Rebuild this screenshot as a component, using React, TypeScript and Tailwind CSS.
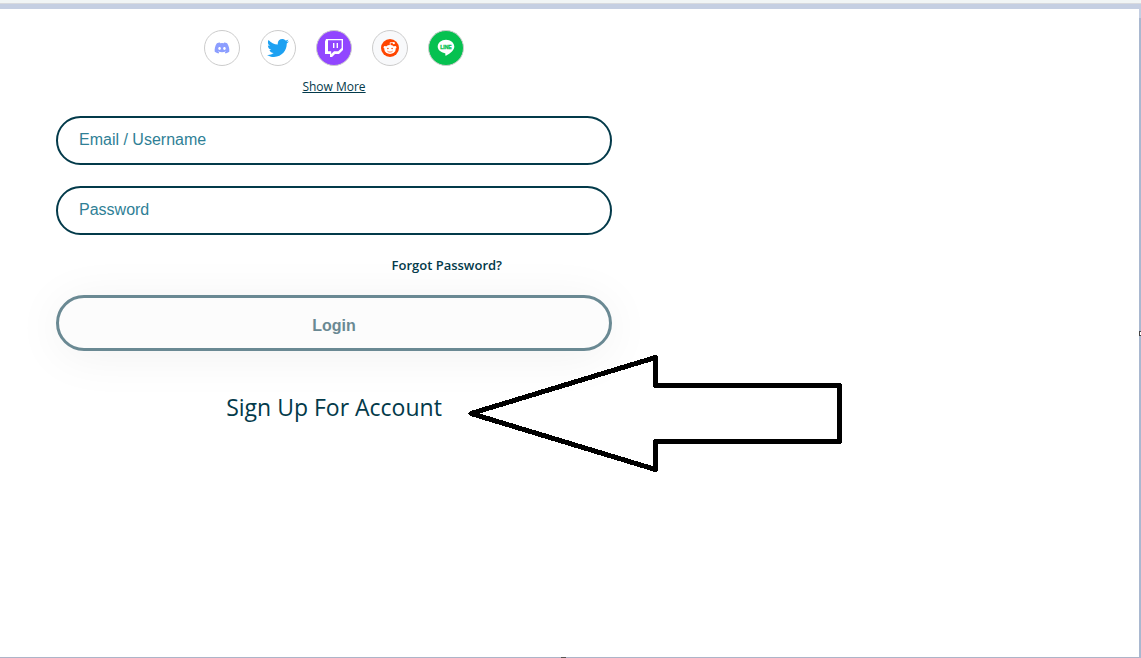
import type { ReactNode } from 'react'
import { FaDiscord, FaTwitter } from 'react-icons/fa'

interface SocialButtonProps {
  label: string;
  className: string;
  children: ReactNode;
}

function SocialButton({label, className, children}: SocialButtonProps) {
  return (
    <button
      type="button"
      aria-label={label}
      className={`flex size-9 items-center justify-center rounded-full border border-[#cccccc] ${className}`}
    >
      {children}
    </button>
  )
}

function TwitchIcon() {
  return (
    <svg viewBox="0 0 20 20" className="size-5" aria-hidden="true">
      <path fill="#fff" fillRule="evenodd" d="M2 1h17v11l-4 4h-4l-3 3H6v-3H1V3.500zM4 2.200v11h3.200V16l2.800-2.800h4.200l3.400-3.200V2.200z" />
      <path fill="#fff" d="M9 5h1.400v5H9zM12.600 5H14v5h-1.400z" />
    </svg>
  )
}

function RedditIcon() {
  return (
    <svg viewBox="0 0 18 18" className="size-[18px]" aria-hidden="true">
      <circle cx="9" cy="9" r="9" fill="#ff4500" />
      <path d="M9.200 6.600V3.600h3" fill="none" stroke="#fff" strokeWidth="0.8" strokeLinejoin="round" />
      <circle cx="12.800" cy="4.200" r="1.100" fill="#fff" />
      <circle cx="3.900" cy="8.400" r="1.300" fill="#fff" />
      <circle cx="14.100" cy="8.400" r="1.300" fill="#fff" />
      <ellipse cx="9" cy="10.500" rx="5.600" ry="4.400" fill="#fff" />
      <circle cx="6.900" cy="9.500" r="0.800" fill="#ff4500" />
      <circle cx="11.100" cy="9.500" r="0.800" fill="#ff4500" />
      <path d="M6.700 12.400c1.200 1 3.400 1 4.600 0" fill="none" stroke="#ff4500" strokeWidth="0.7" strokeLinecap="round" />
    </svg>
  )
}

function LineIcon() {
  return (
    <svg viewBox="0 0 18 18" className="size-[18px]" aria-hidden="true">
      <path fill="#fff" d="M9 .8c4.600 0 8.300 3 8.300 6.800 0 1.600-.6 3-1.900 4.300-1.700 2-5.400 4.200-6.400 4.700-.9.300-.8-.3-.7-.6l.1-1.200c0-.3 0-.5-.5-.6C3.700 13.600.7 10.900.7 7.600.7 3.900 4.400.8 9 .8z" />
      <text x="9" y="9.500" textAnchor="middle" fontSize="5" fontWeight="700" fontFamily="Liberation Sans, sans-serif" fill="#06c150" stroke="#06c150" strokeWidth="0.3">LINE</text>
    </svg>
  )
}

function Arrow() {
  return (
    <svg
      viewBox="0 0 374 118"
      className="pointer-events-none absolute top-[345px] left-[468px] h-[118px] w-[374px]"
      aria-hidden="true"
    >
      <path d="M3 59.500L187.500 3.500v28h184v56h-184v28z" fill="none" stroke="#000" strokeWidth="5" strokeLinejoin="round" shapeRendering="crispEdges" />
    </svg>
  )
}

const fieldClass = "block h-[49px] w-full rounded-full border-2 border-[#033a4a] bg-white px-[21px] pb-px font-['Liberation_Sans',sans-serif] text-base text-[#033a4a] outline-none placeholder:text-[#2f7f96]"

function App() {
  return (
    <div className="relative flex min-h-screen flex-col bg-white font-['Open_Sans',sans-serif] text-[#033a4a]">
      <div className="h-[9px] border-t-[3px] border-[#f1f5f5] bg-[#c5cfe2]">
        <div className="h-px bg-[#d8dade]" />
      </div>

      <main className="relative flex-1 border-r-2 border-b border-r-[#a9b8d0] border-b-[#adb4c8] pt-[21px] pl-14">
        <form className="flex w-full max-w-[556px] flex-col items-center" onSubmit={(e) => e.preventDefault()}>
          <div className="flex gap-5">
            <SocialButton label="Discord" className="bg-white">
              <FaDiscord className="size-4 text-[#8c9eff]" />
            </SocialButton>
            <SocialButton label="Twitter" className="bg-white">
              <FaTwitter className="size-[22px] text-[#1da1f2]" />
            </SocialButton>
            <SocialButton label="Twitch" className="bg-[#9146ff]">
              <TwitchIcon />
            </SocialButton>
            <SocialButton label="Reddit" className="bg-[#f8f9fb]">
              <RedditIcon />
            </SocialButton>
            <SocialButton label="LINE" className="bg-[#06c150]">
              <LineIcon />
            </SocialButton>
          </div>

          <button type="button" className="mt-3 text-xs leading-[18px] underline">Show More</button>

          <div className="mt-5 flex w-full flex-col gap-[21px]">
            <input type="text" aria-label="Email / Username" placeholder="Email / Username" className={fieldClass} />
            <input type="password" aria-label="Password" placeholder="Password" className={fieldClass} />
          </div>

          <div className="relative z-10 mt-5 flex w-full justify-end pr-[110px]">
            <a href="#forgot" className="text-[13px] leading-5 font-semibold">Forgot Password?</a>
          </div>

          <button
            type="submit"
            className="mt-5 h-14 w-full rounded-full border-3 border-[#6a8993] bg-[#fcfcfc] pt-1.5 font-['Liberation_Sans',sans-serif] text-base font-bold text-[#6a8993] shadow-[0_5px_50px_rgba(0,0,0,0.06)]"
          >
            Login
          </button>

          <a href="#signup" className="mt-10 text-[23px] leading-8">Sign Up For Account</a>
        </form>

        <Arrow />
      </main>

      <div className="absolute top-[331px] right-0 h-[5px] w-0.5 border border-r-0 border-[#444444] bg-white" />
      <div className="absolute bottom-0 left-[561px] h-px w-[5px] bg-[#555555]" />
      <div className="absolute top-[9px] right-0 h-[9px] w-0.5 bg-[#c5cfe2]" />
    </div>
  )
}

export default App
